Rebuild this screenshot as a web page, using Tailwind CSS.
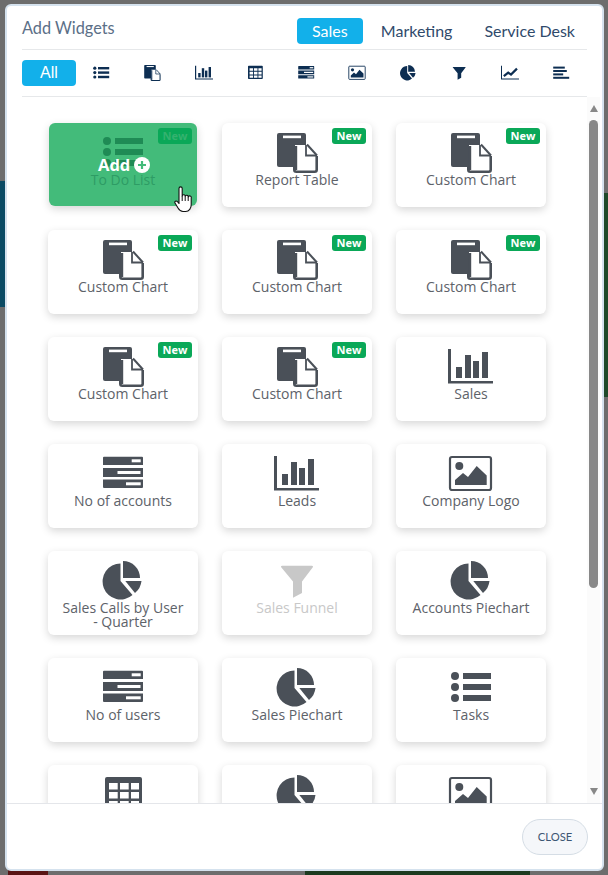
<!DOCTYPE html>
<html lang="en">
<head>
<meta charset="UTF-8">
<title>Add Widgets</title>
<script src="https://cdn.jsdelivr.net/npm/@tailwindcss/browser@4"></script>
</head>
<body class="relative w-[608px] h-[875px] overflow-hidden bg-[#6d6d6d] font-['Open_Sans',sans-serif]">
<!-- page behind the modal -->
<div class="absolute left-0 top-[181px] w-[8px] h-[126px] bg-[#0b4b64]"></div>
<div class="absolute right-0 top-[193px] w-[8px] h-[204px] bg-[#1f4a2a]"></div>
<div class="absolute left-[8px] bottom-0 w-[40px] h-[6px] bg-[#5a1414]"></div>
<div class="absolute left-[305px] bottom-0 w-[225px] h-[6px] bg-[#1c3b20]"></div>

<svg class="hidden">
  <symbol id="i-doc" viewBox="0 0 46 40">
    <path fill="currentColor" d="M5 0h25a2 2 0 0 1 2 2v32H5a2 2 0 0 1-2-2V2a2 2 0 0 1 2-2z"/>
    <rect x="9" y="2.600" width="18" height="2.600" fill="#fff"/>
    <path fill="#fff" d="M21 12h12l11 10v18H21z"/>
    <path fill="none" stroke="currentColor" stroke-width="2.600" d="M20.300 33v3.700a2 2 0 0 0 2 2h18.400a2 2 0 0 0 2-2V23"/>
    <path fill="none" stroke="currentColor" stroke-width="2.400" d="M22 13V37"/>
    <path fill="none" stroke="currentColor" stroke-width="2" d="M33 11.500L43 22.500"/>
    <path fill="none" stroke="currentColor" stroke-width="1.800" d="M32 12v10.500H43"/>
  </symbol>
  <symbol id="i-list" viewBox="0 0 46 40">
    <circle cx="7" cy="8" r="4" fill="currentColor"/>
    <circle cx="7" cy="19" r="4" fill="currentColor"/>
    <circle cx="7" cy="30" r="4" fill="currentColor"/>
    <rect x="15" y="5" width="28" height="6" fill="currentColor"/>
    <rect x="15" y="16" width="28" height="6" fill="currentColor"/>
    <rect x="15" y="27" width="28" height="6" fill="currentColor"/>
  </symbol>
  <symbol id="i-chart" viewBox="0 0 46 40">
    <path fill="currentColor" d="M0 2h3v32h42v2.500H0z"/>
    <rect x="8" y="20" width="6" height="11" fill="currentColor"/>
    <rect x="17" y="8" width="6" height="23" fill="currentColor"/>
    <rect x="25" y="14" width="6" height="17" fill="currentColor"/>
    <rect x="34" y="5" width="6" height="26" fill="currentColor"/>
  </symbol>
  <symbol id="i-server" viewBox="0 0 46 40">
    <path fill="currentColor" d="M4 2.700h38a1 1 0 0 1 1 1V11H3V3.700a1 1 0 0 1 1-1zM3 14h40v9H3zM3 25.500h40V33a1 1 0 0 1-1 1H4a1 1 0 0 1-1-1z"/>
    <rect x="31.700" y="5.300" width="9" height="3" fill="#fff"/>
    <rect x="17.500" y="17" width="23" height="3" fill="#fff"/>
    <rect x="26" y="28.300" width="14.700" height="3" fill="#fff"/>
  </symbol>
  <symbol id="i-image" viewBox="0 0 46 40">
    <rect x="2" y="3" width="41" height="33" rx="2" fill="none" stroke="currentColor" stroke-width="2.200"/>
    <circle cx="11.300" cy="12" r="4" fill="currentColor"/>
    <path fill="currentColor" d="M7 31v-5l8-7 5 4 8.700-11 10 9.500V31z"/>
  </symbol>
  <symbol id="i-pie" viewBox="0 0 46 40">
    <path fill="currentColor" d="M20.500 2.500V20L32.500 34A18 18 0 1 1 20.500 2.500z"/>
    <path fill="currentColor" d="M23 0A17 17 0 0 1 40 17H23z"/>
    <path fill="currentColor" d="M25.300 20H41.500A18 18 0 0 1 35 32z"/>
  </symbol>
  <symbol id="i-funnel" viewBox="0 0 46 40">
    <path fill="currentColor" d="M8 4.700H38a1 1 0 0 1 .8 1.600L28 20.500V32l-9 4.700V20.500L7.200 6.300A1 1 0 0 1 8 4.700z"/>
  </symbol>
  <symbol id="i-table" viewBox="0 0 46 40">
    <path fill="currentColor" fill-rule="evenodd" d="M7 2h33a2 2 0 0 1 2 2v29a2 2 0 0 1-2 2H7a2 2 0 0 1-2-2V4a2 2 0 0 1 2-2zM9 8v6.500h8.700V8zM20 8v6.500h8.700V8zM31 8v6.500h8V8zM9 17v6.500h8.700V17zM20 17v6.500h8.700V17zM31 17v6.500h8V17zM9 26v6h8.700v-6zM20 26v6h8.700v-6zM31 26v6h8v-6z"/>
  </symbol>
  <symbol id="i-line" viewBox="0 0 46 40">
    <path fill="currentColor" d="M0 2h2.500v32H45v2.500H0z"/>
    <path fill="none" stroke="currentColor" stroke-width="5.500" d="M7 28l11-9 7 5 15-15"/>
  </symbol>
  <symbol id="i-bars" viewBox="0 0 46 40">
    <rect x="3" y="4" width="29" height="5" fill="currentColor"/>
    <rect x="3" y="12.500" width="34" height="5" fill="currentColor"/>
    <rect x="3" y="21" width="25" height="5" fill="currentColor"/>
    <rect x="3" y="29.500" width="40" height="5" fill="currentColor"/>
  </symbol>
</svg>

<!-- modal -->
<div class="absolute left-[5px] top-[4px] w-[599px] h-[867px] flex flex-col bg-white border-2 border-[#d5e2ee] rounded-[6px] overflow-hidden">
  <div class="flex items-center justify-between mx-[15px] h-[44px] border-b border-[#e6e8ea] font-['Lato',sans-serif]">
    <h1 class="text-[16.300px] leading-none mt-[1px] text-[#5b6f87]">Add Widgets</h1>
    <div class="flex items-center text-[16px] text-[#2f4a6b] mt-[6px] pr-[12px]">
      <span class="w-[66px] h-[26px] flex items-center justify-center rounded-[4px] bg-[#12b0ea] text-white">Sales</span>
      <span class="ml-[18px]">Marketing</span>
      <span class="ml-[32px]">Service Desk</span>
    </div>
  </div>
  <div class="flex items-center mx-[15px] h-[47px] border-b border-[#e6e8ea] text-[#0d2e52]">
    <span class="w-[54px] h-[26px] flex items-center justify-center rounded-[4px] bg-[#12b0ea] text-white text-[16px] font-['Liberation_Sans',sans-serif]">All</span>
    <span class="w-[51.2px] flex justify-center"><svg class="w-[18.400px] h-[16px]"><use href="#i-list"/></svg></span>
    <span class="w-[51.2px] flex justify-center"><svg class="w-[18.400px] h-[16px]"><use href="#i-doc"/></svg></span>
    <span class="w-[51.2px] flex justify-center"><svg class="w-[18.400px] h-[16px]"><use href="#i-chart"/></svg></span>
    <span class="w-[51.2px] flex justify-center"><svg class="w-[18.400px] h-[16px]"><use href="#i-table"/></svg></span>
    <span class="w-[51.2px] flex justify-center"><svg class="w-[18.400px] h-[16px]"><use href="#i-server"/></svg></span>
    <span class="w-[51.2px] flex justify-center"><svg class="w-[18.400px] h-[16px]"><use href="#i-image"/></svg></span>
    <span class="w-[51.2px] flex justify-center"><svg class="w-[18.400px] h-[16px]"><use href="#i-pie"/></svg></span>
    <span class="w-[51.2px] flex justify-center"><svg class="w-[18.400px] h-[16px]"><use href="#i-funnel"/></svg></span>
    <span class="w-[51.2px] flex justify-center"><svg class="w-[18.400px] h-[16px]"><use href="#i-line"/></svg></span>
    <span class="w-[51.2px] flex justify-center"><svg class="w-[18.400px] h-[16px]"><use href="#i-bars"/></svg></span>
  </div>

  <div class="flex h-[707px] border-b border-[#e4e6ea]">
    <div id="cards" class="flex-1 overflow-hidden grid grid-cols-[150px_150px_150px] auto-rows-[84px] gap-x-[24px] gap-y-[23px] pl-[41px] pt-[26px]"></div>
    <div class="w-[13px] mr-[2px] bg-[#fbfbfb] flex flex-col items-center">
      <div class="mt-[8px] w-0 h-0 border-x-[4.500px] border-x-transparent border-b-[7px] border-b-[#888]"></div>
      <div class="mt-[8px] w-[9px] h-[468px] rounded-full bg-[#888]"></div>
      <div class="mt-[200px] w-0 h-0 border-x-[4.500px] border-x-transparent border-t-[7px] border-t-[#888]"></div>
    </div>
  </div>

  <div class="flex-1 flex justify-end items-start pt-[15px] pr-[14px]">
    <button class="w-[66px] h-[36px] rounded-full border border-[#d5dde5] bg-[#f5f7fa] text-[11.200px] text-[#3d5673] font-['Lato',sans-serif]">CLOSE</button>
  </div>
</div>

<!-- hand cursor -->
<svg class="absolute left-[174px] top-[186px] w-[20px] h-[27px]" viewBox="0 0 20 27">
  <path fill="#fff" stroke="#111" stroke-width="1.100" stroke-linejoin="round" d="M5 2.500a1.600 1.600 0 0 1 3.200 0V10a1.500 1.500 0 0 1 3 .5 1.500 1.500 0 0 1 3 .5 1.500 1.500 0 0 1 3 1V19c0 3-2 6.500-5.500 6.500H9c-2.500 0-3.800-1.500-5-3.500L1 17c-.8-1.400 1-2.800 2.300-1.500L5 17.500z"/>
  <path fill="none" stroke="#111" stroke-width="1" d="M8.200 10v5M11.200 10.500V15M14.200 11v4"/>
</svg>

<script>
  // last row is cut by the footer, its labels never show
  const widgets = [
    ['i-list', 'To Do List', true],
    ['i-doc', 'Report Table', true],
    ['i-doc', 'Custom Chart', true],
    ['i-doc', 'Custom Chart', true],
    ['i-doc', 'Custom Chart', true],
    ['i-doc', 'Custom Chart', true],
    ['i-doc', 'Custom Chart', true],
    ['i-doc', 'Custom Chart', true],
    ['i-chart', 'Sales', false],
    ['i-server', 'No of accounts', false],
    ['i-chart', 'Leads', false],
    ['i-image', 'Company Logo', false],
    ['i-pie', 'Sales Calls by User - Quarter', false],
    ['i-funnel', 'Sales Funnel', false],
    ['i-pie', 'Accounts Piechart', false],
    ['i-server', 'No of users', false],
    ['i-pie', 'Sales Piechart', false],
    ['i-list', 'Tasks', false],
    ['i-table', '', false],
    ['i-pie', '', false],
    ['i-image', '', false]
  ];

  document.getElementById('cards').innerHTML = widgets.map(([icon, label, isNew], i) => {
    const hovered = i === 0;
    const disabled = label === 'Sales Funnel';
    const cardCls = hovered ? 'bg-[#43bb7a] text-[#1f8b55] w-[148px] h-[83px] ml-[1px]' : disabled ? 'bg-white text-[#c8c8c8] h-[84px]' : 'bg-white text-[#4a5058] h-[84px]';
    const textCls = hovered ? 'text-[#2e9c65]' : disabled ? 'text-[#c8c8c8]' : 'text-[#5d6269]';
    const badgeCls = hovered ? 'text-[#34b26f] right-[5px]' : 'text-white right-[6px]';
    return `
      <div class="relative rounded-[6px] shadow-[0_3px_8px_rgba(0,0,0,0.16)] flex flex-col items-center pt-[10px] ${cardCls}">
        <svg class="w-[46px] h-[40px] shrink-0"><use href="#${icon}"/></svg>
        <p class="px-[12px] text-center text-[14px] leading-[14px] ${textCls}">${label}</p>
        ${isNew ? `<span class="absolute top-[5px] w-[34px] h-[16px] flex items-center justify-center rounded-[3px] bg-[#0aa858] text-[11px] font-bold ${badgeCls}">New</span>` : ''}
        ${hovered ? `<div class="absolute left-[49px] top-[33px] flex items-center gap-[4px] text-white text-[16.500px] font-bold leading-[18px]">Add
          <svg class="w-[16px] h-[16px]" viewBox="0 0 16 16"><circle cx="8" cy="8" r="8" fill="#fff"/><path d="M8 4v8M4 8h8" stroke="#43bb7a" stroke-width="2.200"/></svg></div>` : ''}
      </div>`;
  }).join('');
</script>
</body>
</html>
